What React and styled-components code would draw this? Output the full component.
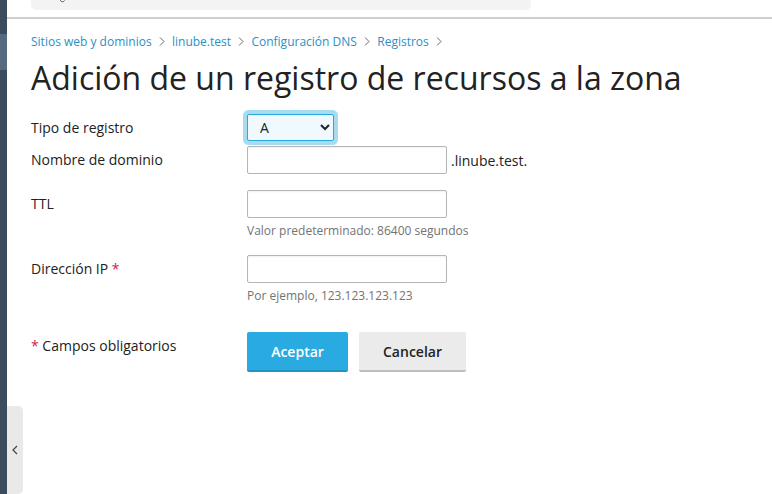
import React from "react";
import styled, { createGlobalStyle } from "styled-components";

const Global = createGlobalStyle`
  html, body { margin: 0; padding: 0; background: #fff; height: 100%; overflow: hidden; }
  #root { height: 100%; }
  * { box-sizing: border-box; }
  body { font-family: "Open Sans", "Liberation Sans", sans-serif; font-size: 14px; color: #222; }
`;

const Page = styled.div`
  display: flex;
  width: 772px;
  height: 494px;
  position: relative;
  overflow: hidden;
`;
const Sidebar = styled.div`
  width: 7px;
  flex: none;
  background: #3a4c5e;
  padding-top: 34px;
`;
const SideItem = styled.div`
  height: 36px;
  background: #566b7f;
`;
const Main = styled.div`
  flex: 1;
  min-width: 0;
`;
const Header = styled.div`
  height: 19px;
  border-bottom: 2px solid #cfcfcf;
  padding-left: 24px;
`;
const SearchBox = styled.div`
  width: 500px;
  height: 10px;
  background: #f3f3f3;
  border-radius: 0 0 5px 5px;
  padding-left: 29px;
`;
const SearchGlyph = styled.svg`
  display: block;
  width: 5px;
  height: 3px;
  fill: none;
  stroke: #555;
  stroke-width: 1;
`;
const Content = styled.div`
  padding: 12px 0 0 24px;
`;
const Breadcrumbs = styled.nav`
  display: flex;
  align-items: center;
  height: 20px;
  font-size: 12px;
  color: #2a8bc0;
`;
const Crumb = styled.a`
  color: #2b8fc5;
`;
const Sep = styled.svg`
  width: 6px;
  height: 9px;
  margin: 0 7.2px;
  fill: none;
  stroke: #666;
  stroke-width: 1;
`;
const Title = styled.h1`
  margin: 4px 0 0;
  font-size: 32px;
  font-weight: 400;
  line-height: 46px;
  color: #222;
  white-space: nowrap;
`;
const Form = styled.form`
  margin-top: 12px;
  display: grid;
  grid-template-columns: 216px 1fr;
`;
const Label = styled.label`
  font-size: 14px;
  line-height: 19px;
  color: #222;
  padding-top: ${(p) => p.$top || 0}px;
`;
const Field = styled.div`
  margin-bottom: ${(p) => p.$gap || 0}px;
`;
const InputLine = styled.div`
  display: flex;
  align-items: center;
  font-size: 14px;
`;
const Select = styled.select`
  display: block;
  width: 87px;
  height: 27px;
  padding: 0 0 0 8px;
  margin: 1px 0 0;
  border: 1px solid #28aade;
  border-radius: 2px;
  background: #f0f9fe;
  box-shadow: 0 0 0 4px #a6dcf2;
  font: 14px "Open Sans", sans-serif;
  color: #222;
  outline: none;
`;
const Input = styled.input`
  display: block;
  width: 200px;
  height: 28px;
  border: 1px solid #b5b5b5;
  border-radius: 2px;
  background: #fff;
  box-shadow: inset 0 1px 2px rgba(0, 0, 0, 0.06);
  margin: 0;
`;
const Suffix = styled.span`
  margin-left: 4px;
  color: #222;
`;
const Hint = styled.div`
  margin-top: 4px;
  font-size: 12px;
  line-height: 18px;
  color: #737373;
`;
const Required = styled.span`
  color: #d0214f;
`;
const Buttons = styled.div`
  display: flex;
  gap: 11px;
`;
const Button = styled.button`
  height: 40px;
  width: ${(p) => p.$w}px;
  border: none;
  border-bottom: 2px solid ${(p) => (p.$primary ? "#2193c4" : "#bdbdbd")};
  border-radius: 2px;
  background: ${(p) => (p.$primary ? "#29abe2" : "#ebebeb")};
  color: ${(p) => (p.$primary ? "#fff" : "#222")};
  font: 600 14px "Open Sans", sans-serif;
  padding: 0;
`;
const Collapse = styled.div`
  position: absolute;
  left: 7px;
  top: 406px;
  width: 16px;
  height: 88px;
  background: #e9e9e9;
  border-radius: 0 5px 5px 0;
  display: flex;
  align-items: center;
  justify-content: center;
  padding-right: 1px;
`;
const Chevron = styled.svg`
  width: 6px;
  height: 10px;
  fill: none;
  stroke: #444;
  stroke-width: 1.2;
`;

const Arrow = () => (
  <Sep viewBox="0 0 6 9"><path d="M1 .5 5 4.5 1 8.5" /></Sep>
);

export default function App() {
  return (
    <Page>
      <Global />
      <Sidebar><SideItem /></Sidebar>
      <Main>
        <Header>
          <SearchBox>
            <SearchGlyph viewBox="0 0 5 3"><path d="M.5 0C.5 2 3.5 2.5 4.5 .5" /></SearchGlyph>
          </SearchBox>
        </Header>
        <Content>
          <Breadcrumbs>
            <Crumb>Sitios web y dominios</Crumb><Arrow />
            <Crumb>linube.test</Crumb><Arrow />
            <Crumb>Configuración DNS</Crumb><Arrow />
            <Crumb>Registros</Crumb><Arrow />
          </Breadcrumbs>
          <Title>Adición de un registro de recursos a la zona</Title>
          <Form>
            <Label $top={5}>Tipo de registro</Label>
            <Field $gap={5}>
              <Select defaultValue="A"><option>A</option></Select>
            </Field>
            <Label $top={4}>Nombre de dominio</Label>
            <Field $gap={16}>
              <InputLine><Input /><Suffix>.linube.test.</Suffix></InputLine>
            </Field>
            <Label $top={4}>TTL</Label>
            <Field $gap={15}>
              <Input />
              <Hint>Valor predeterminado: 86400 segundos</Hint>
            </Field>
            <Label $top={4}>Dirección IP <Required>*</Required></Label>
            <Field $gap={27}>
              <Input />
              <Hint>Por ejemplo, 123.123.123.123</Hint>
            </Field>
            <Label $top={4}><Required>*</Required> Campos obligatorios</Label>
            <Buttons>
              <Button type="button" $primary $w={101}>Aceptar</Button>
              <Button type="button" $w={107}>Cancelar</Button>
            </Buttons>
          </Form>
        </Content>
      </Main>
      <Collapse>
        <Chevron viewBox="0 0 6 10"><path d="M5 1 1 5 5 9" /></Chevron>
      </Collapse>
    </Page>
  );
}
